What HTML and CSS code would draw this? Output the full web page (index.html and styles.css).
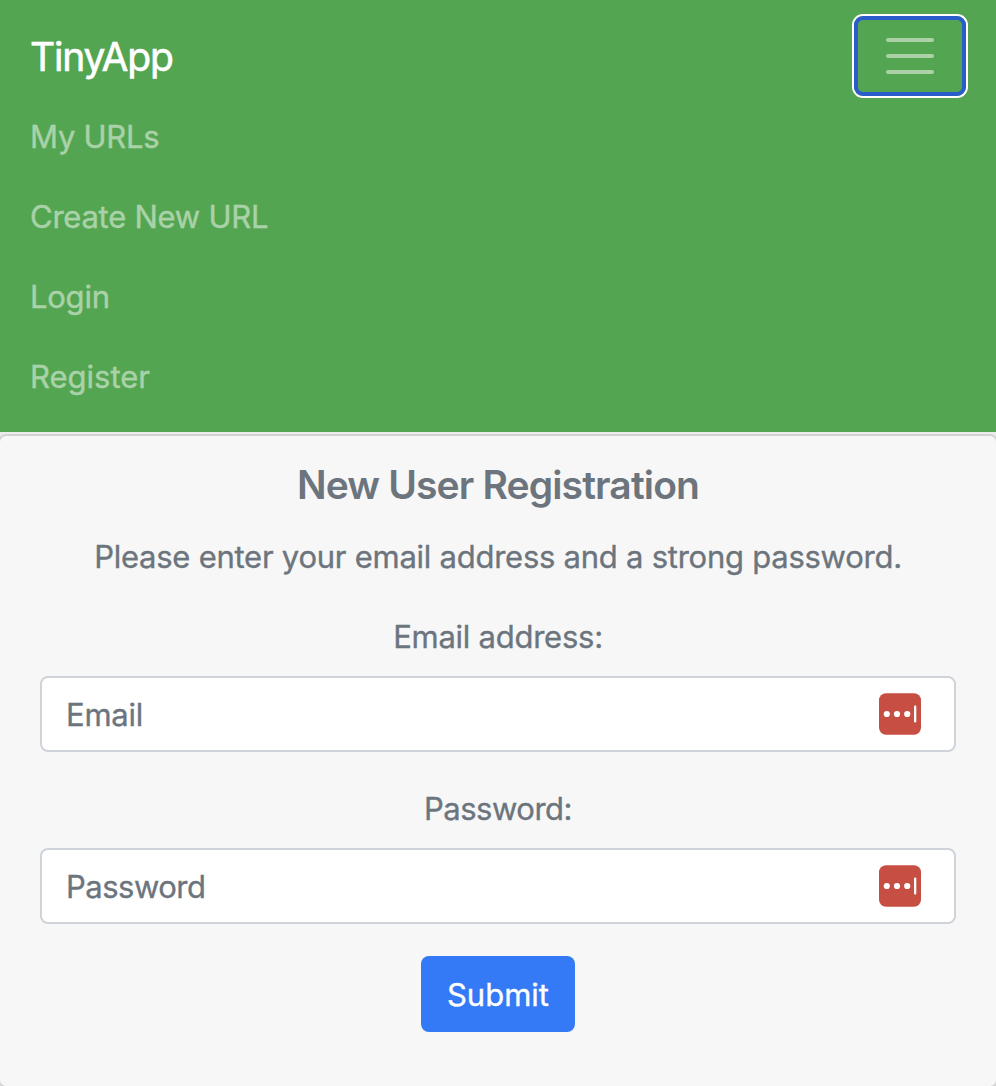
FILE: index.html
```html
<!DOCTYPE html>
<html lang="en">
<head>
<meta charset="utf-8">
<title>TinyApp</title>
<link rel="stylesheet" href="styles.css">
</head>
<body>
<nav class="navbar">
  <div class="navbar-top">
    <a class="brand">TinyApp</a>
    <button class="toggler" aria-label="Toggle navigation">
      <svg width="60" height="60" viewBox="0 0 30 30"><path stroke="rgba(255,255,255,.5)" stroke-width="2" stroke-linecap="round" d="M4 7h22M4 15h22M4 23h22"/></svg>
    </button>
  </div>
  <ul class="links">
    <li><a>My URLs</a></li>
    <li><a>Create New URL</a></li>
    <li><a>Login</a></li>
    <li><a class="loose">Register</a></li>
  </ul>
</nav>
<main class="card">
  <h5 class="title">New User Registration</h5>
  <p class="intro">Please enter your email address and a strong password.</p>
  <form class="form">
    <label class="label">Email address:</label>
    <div class="field"><span>Email</span>
      <svg width="42" height="42" viewBox="0 0 42 42"><rect y=".3" width="42" height="41.5" rx="7" fill="#c74e43"/><g fill="#fff"><circle cx="7.8" cy="21" r="3.1"/><circle cx="18" cy="21" r="3.1"/><circle cx="28.2" cy="21" r="3.1"/><rect x="35" y="12.5" width="2.3" height="17" rx="1"/></g></svg>
    </div>
    <label class="label tight">Password:</label>
    <div class="field"><span class="tight">Password</span>
      <svg width="42" height="42" viewBox="0 0 42 42"><rect y=".3" width="42" height="41.5" rx="7" fill="#c74e43"/><g fill="#fff"><circle cx="7.8" cy="21" r="3.1"/><circle cx="18" cy="21" r="3.1"/><circle cx="28.2" cy="21" r="3.1"/><rect x="35" y="12.5" width="2.3" height="17" rx="1"/></g></svg>
    </div>
    <button class="submit" type="button">Submit</button>
  </form>
</main>
</body>
</html>
```
FILE: styles.css
```css
* { box-sizing: border-box; }
body { margin: 0; height: 1086px; overflow: hidden; background: #ececec; color: #6c757d; font: 400 31px/48px Inter, sans-serif; letter-spacing: -0.25px; -webkit-text-stroke: 0.35px currentColor; }
.navbar { height: 432px; padding: 16px 30px; background: #53a551; }
.navbar-top { display: flex; justify-content: space-between; align-items: center; height: 80px; }
.brand { color: #fff; font-size: 39px; line-height: 60px; letter-spacing: -1.2px; padding-top: 1px; -webkit-text-stroke-width: 0.6px; }
.toggler { width: 112px; height: 80px; padding: 0; display: flex; align-items: center; justify-content: center; background: transparent; border: 4px solid #2a5dcb; border-radius: 9px; box-shadow: 0 0 0 2px #fff; }
.links { list-style: none; margin: 0; padding: 0; }
/* Opacity keeps the stroke and fill of the muted links evenly blended. */
.links li { height: 80px; padding-top: 17px; color: #fff; opacity: .5; }
.loose { letter-spacing: 0; }
.tight { letter-spacing: -0.5px; }
.card { height: 654px; margin: 2px -2px 0; border: 2px solid #d3d3d3; padding: 18px 40px; text-align: center; background: #f7f7f7; border-radius: 8px; }
.title { margin: 7px 0 24px; font-size: 39px; line-height: 48px; font-weight: 600; letter-spacing: -0.85px; -webkit-text-stroke-width: 0; }
.intro { margin: 0 0 32px; }
.form { display: flex; flex-direction: column; align-items: center; }
.label { display: block; margin-bottom: 15px; }
.field { width: 100%; height: 76px; margin-bottom: 33px; padding: 0 33px 0 24px; border: 2px solid #ced4da; border-radius: 8px; background: #fff; display: flex; align-items: center; justify-content: space-between; }
.field span { padding-top: 2px; }
.submit { width: 154px; height: 76px; margin-top: -1px; border: 0; border-radius: 8px; padding: 2px 0 0; background: #347af6; color: #fff; font: inherit; letter-spacing: 0; }
```
